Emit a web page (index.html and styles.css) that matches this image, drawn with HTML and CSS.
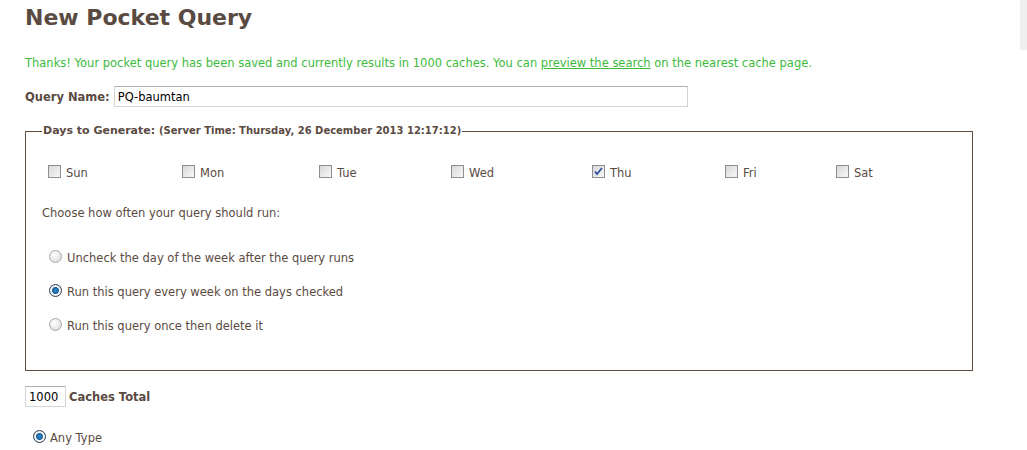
FILE: index.html
```html
<!DOCTYPE html>
<html lang="en">
<head>
  <title>New Pocket Query</title>
  <meta charset="utf-8">
  <link rel="stylesheet" href="styles.css">
</head>
<body>
  <div class="scroll-thumb"></div>
  <main class="page">
    <h1 class="page__title">New Pocket Query</h1>
    <p class="page__notice">Thanks! Your pocket query has been saved and currently results in 1000 caches. You can <a class="page__link" href="#">preview the search</a> on the nearest cache page.</p>

    <div class="field">
      <label class="field__label" for="name">Query Name:</label>
      <input class="field__input field__input--name" id="name" type="text" value="PQ-baumtan">
    </div>

    <fieldset class="days">
      <legend class="days__legend">Days to Generate: <span class="days__time">(Server Time: Thursday, 26 December 2013 12:17:12)</span></legend>

      <div class="days__week">
        <label class="check"><input class="check__box" type="checkbox"> Sun</label>
        <label class="check"><input class="check__box" type="checkbox"> Mon</label>
        <label class="check"><input class="check__box" type="checkbox"> Tue</label>
        <label class="check"><input class="check__box" type="checkbox"> Wed</label>
        <label class="check"><input class="check__box" type="checkbox" checked> Thu</label>
        <label class="check"><input class="check__box" type="checkbox"> Fri</label>
        <label class="check"><input class="check__box" type="checkbox"> Sat</label>
      </div>

      <p class="days__hint">Choose how often your query should run:</p>

      <div class="days__options">
        <label class="radio"><input class="radio__dot" type="radio" name="freq"> Uncheck the day of the week after the query runs</label>
        <label class="radio"><input class="radio__dot" type="radio" name="freq" checked> Run this query every week on the days checked</label>
        <label class="radio"><input class="radio__dot" type="radio" name="freq"> Run this query once then delete it</label>
      </div>
    </fieldset>

    <div class="field field--total">
      <input class="field__input field__input--total" type="text" value="1000">
      <span class="field__label">Caches Total</span>
    </div>

    <label class="radio radio--type"><input class="radio__dot" type="radio" name="type" checked> Any Type</label>
  </main>
</body>
</html>
```

FILE: styles.css
```css
*, *::before, *::after {
  box-sizing: border-box;
}

body {
  margin: 0;
  font-family: "DejaVu Sans", Verdana, sans-serif;
  font-size: 11.5px;
  color: #5a4a42;
  background-color: #ffffff;
}

.scroll-thumb {
  position: absolute;
  top: 0;
  right: 0;
  width: 7px;
  height: 50px;
  background-color: #efefef;
}

.page {
  padding: 6px 0 0 25px;
}

.page__title {
  margin: 0;
  font-size: 22px;
  line-height: 24px;
  font-weight: bold;
  color: #594a42;
}

.page__notice {
  margin: 26px 0 0;
  line-height: 14px;
  color: #3dbb3d;
}

.page__link {
  color: #3dbb3d;
}

.field {
  display: flex;
  align-items: center;
  gap: 4px;
  margin-top: 16px;
}

.field__label {
  font-weight: bold;
  color: #594a42;
}

.field__input {
  height: 21px;
  padding: 0 3px;
  border: 1px solid #d4d4d4;
  border-top-color: #b0b0b0;
  font: inherit;
  font-size: 11.5px;
  color: #000000;
}

.field__input--name {
  width: 574px;
}

.field__input--total {
  width: 41px;
}

.field--total {
  gap: 3px;
  margin-top: 15px;
}

.days {
  width: 948px;
  height: 247px;
  margin: 17px 0 0;
  padding: 0 0 0 16px;
  border: 1px solid #5f4b3f;
}

.days__legend {
  padding: 0 1px;
  font-weight: bold;
  font-size: 11px;
  line-height: 14px;
}

.days__time {
  font-size: 10px;
}

.days__week {
  display: grid;
  grid-template-columns: 134px 137px 132px 141px 133px 111px 80px;
  margin-top: 27px;
  padding-left: 6px;
}

.check {
  display: flex;
  align-items: flex-end;
  gap: 5px;
}

.check__box,
.radio__dot {
  appearance: none;
  margin: 0;
  width: 13px;
  height: 13px;
  border: 1px solid #8f8f8f;
  background: linear-gradient(135deg, #d8d8d8, #f8f8f8);
}

.check__box {
  margin-bottom: 2px;
}

.check__box:checked {
  background:
    url("data:image/svg+xml,%3Csvg xmlns='http://www.w3.org/2000/svg' viewBox='0 0 11 11'%3E%3Cpath d='M2 5.5l2 2.5 5-6' fill='none' stroke='%23334fa0' stroke-width='1.8'/%3E%3C/svg%3E") center / 11px no-repeat,
    linear-gradient(135deg, #d8d8d8, #f8f8f8);
}

.days__hint {
  margin: 26px 0 0;
}

.days__options {
  display: flex;
  flex-direction: column;
  gap: 20px;
  margin-top: 31px;
  padding-left: 7px;
}

.radio {
  display: flex;
  align-items: center;
  gap: 5px;
  line-height: 14px;
}

.radio__dot {
  border-radius: 50%;
  border-color: #a8a8a8;
  background: radial-gradient(circle at 40% 35%, #ffffff, #d6d6d6);
  transform: translateY(-2px);
}

.radio__dot:checked {
  border-color: #2b3f55;
  background: radial-gradient(circle, #2f8ed8 0, #1a5f9a 3px, #ffffff 4px, #dcdcdc 6px);
}

.radio--type {
  margin: 24px 0 0 8px;
  gap: 4px;
}
```
